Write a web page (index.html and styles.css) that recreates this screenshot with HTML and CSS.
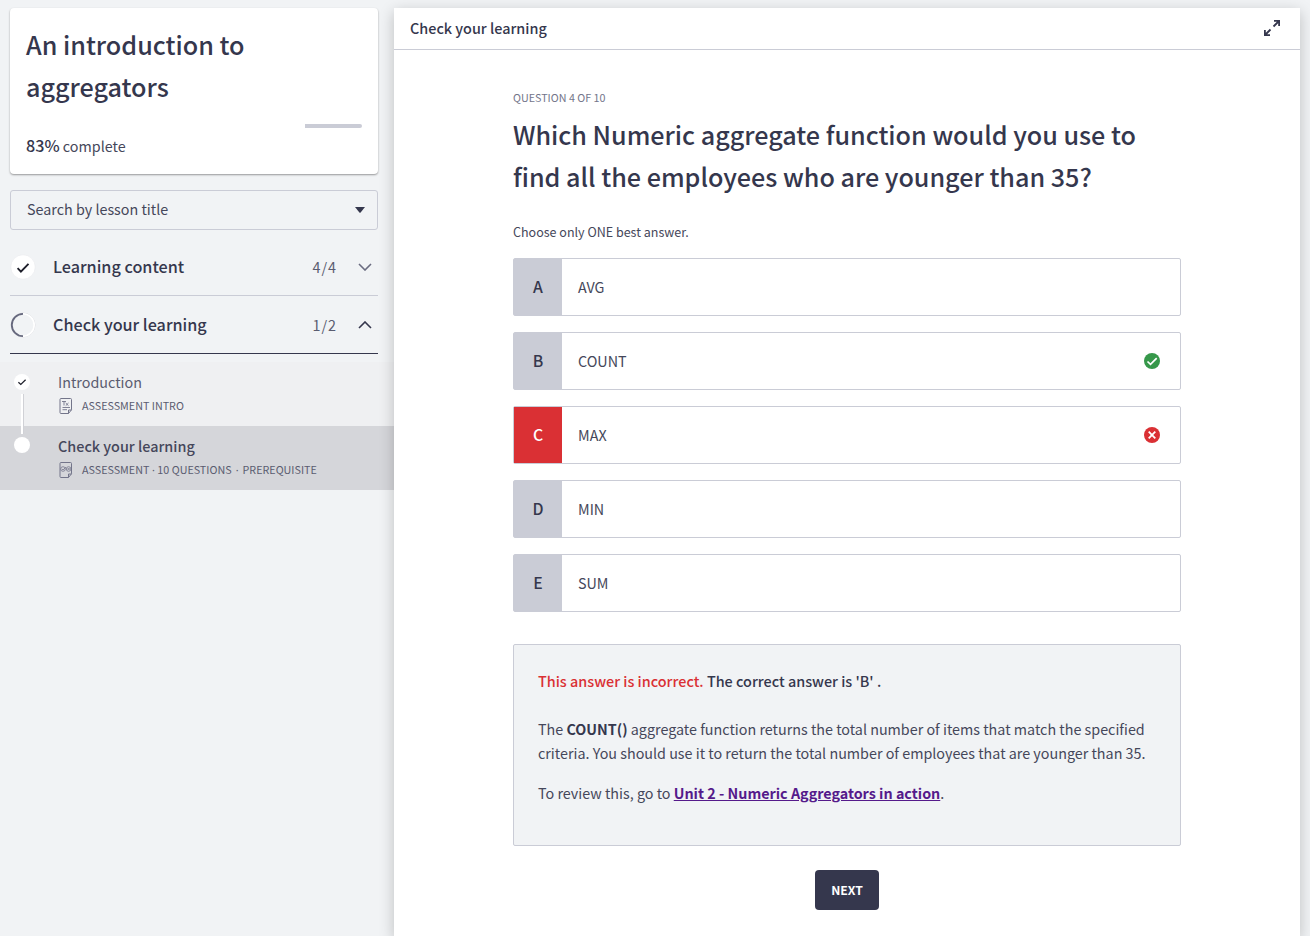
FILE: index.html
```html
<!DOCTYPE html>
<html lang="en">
<head>
<meta charset="utf-8">
<title>An introduction to aggregators</title>
<link rel="stylesheet" href="styles.css">
</head>
<body>
<div class="app">
  <aside class="sidebar">
    <section class="course-card">
      <h1 class="title">An introduction to aggregators</h1>
      <div class="progress"><div class="progress-rest"></div></div>
      <p class="complete"><span class="percent">83%</span> complete</p>
    </section>
    <div class="search">
      <span class="search-text">Search by lesson title</span>
      <svg width="10" height="6" viewBox="0 0 10 6"><path d="M0 0h10L5.6 5.5q-.6.6-1.2 0z" fill="#35374d"/></svg>
    </div>
    <div class="section">
      <svg class="state" width="26" height="26" viewBox="0 0 26 26"><circle cx="13" cy="13" r="12.2" fill="#fff" stroke="#e6e7ea" stroke-width=".5"/><path d="M7.6 14.2l3.3 3.4 7.6-7.8" fill="none" stroke="#1e1f2b" stroke-width="1.9"/></svg>
      <span class="section-name">Learning content</span>
      <span class="count">4/4</span>
      <svg width="14" height="8" viewBox="0 0 14 8"><path d="M1 1l6 6 6-6" fill="none" stroke="#6a6c80" stroke-width="1.6"/></svg>
    </div>
    <div class="section open">
      <svg class="state" width="26" height="26" viewBox="0 0 26 26"><circle cx="13" cy="13" r="12" fill="none" stroke="#dedfe3" stroke-width="1"/><path d="M13 1.8a11.2 11.2 0 0 1 0 22.4" fill="none" stroke="#fff" stroke-width="1.6"/><path d="M13 1.8a11.2 11.2 0 0 0 0 22.4" fill="none" stroke="#66687d" stroke-width="1.8"/></svg>
      <span class="section-name">Check your learning</span>
      <span class="count">1/2</span>
      <svg width="14" height="8" viewBox="0 0 14 8"><path d="M1 7l6-6 6 6" fill="none" stroke="#35374d" stroke-width="1.6"/></svg>
    </div>
    <div class="lessons">
      <div class="lesson">
        <svg class="dot" width="16" height="16" viewBox="0 0 16 16"><circle cx="8" cy="8" r="8" fill="#fff"/><path d="M4.4 8.2l2.4 2.3 4.8-4.7" fill="none" stroke="#1e1f2b" stroke-width="1.2"/></svg>
        <div class="lesson-name">Introduction</div>
        <div class="lesson-meta">
          <svg width="14" height="16" viewBox="0 0 14 16" fill="none" stroke="#73758a" stroke-width="1"><path d="M2 .5h9.500q1 0 1 1v10.300l-3 3.700h-7.500q-1 0-1-1v-13q0-1 1-1zM9.500 15.500v-3.500h3"/><path d="M3 3.500h4M5 3.500v4M6.700 5l2.800 2.700M9.500 5l-2.800 2.700M3.500 9.500h7.500M3.500 11.700h4.500" stroke-width=".9"/></svg>
          <span>ASSESSMENT INTRO</span>
        </div>
      </div>
      <div class="lesson current">
        <svg class="dot" width="16" height="16" viewBox="0 0 16 16"><circle cx="8" cy="8" r="8" fill="#fff"/></svg>
        <div class="lesson-name">Check your learning</div>
        <div class="lesson-meta">
          <svg width="14" height="16" viewBox="0 0 14 16" fill="none" stroke="#73758a" stroke-width="1"><path d="M2 .5h9.500q1 0 1 1v10.300l-3 3.700h-7.500q-1 0-1-1v-13q0-1 1-1zM9.500 15.500v-3.500h3"/><g stroke-width=".8"><circle cx="4" cy="7" r="2.300"/><circle cx="9.600" cy="7" r="2.300"/><path d="M3 7l1 1 3-3M8.600 6l2 2M10.600 6l-2 2"/></g></svg>
          <span>ASSESSMENT<i class="sep">·</i>10 QUESTIONS<i class="sep wide">·</i>PREREQUISITE</span>
        </div>
      </div>
      <div class="connector"></div>
    </div>
  </aside>
  <main class="panel">
    <header class="panel-head">
      <span class="panel-name">Check your learning</span>
      <svg width="16" height="16" viewBox="0 0 16 16" fill="none" stroke="#35374d" stroke-width="1.800"><path d="M10 .9h5.100v5.100M15 1L9.500 6.500M6 15.100H.9v-5.100M1 15l5.500-5.500"/></svg>
    </header>
    <div class="question">
      <div class="number">QUESTION 4 OF 10</div>
      <h2 class="title">Which Numeric aggregate function would you use to find all the employees who are younger than 35?</h2>
      <p class="hint">Choose only ONE best answer.</p>
      <div class="answers">
        <div class="answer"><b class="letter">A</b><span>AVG</span></div>
        <div class="answer"><b class="letter">B</b><span>COUNT</span>
          <svg width="16" height="16" viewBox="0 0 16 16"><circle cx="8" cy="8" r="8" fill="#36984a"/><path d="M3.500 8.500l3 2.900 6.200-6.200" fill="none" stroke="#fff" stroke-width="1.700"/></svg></div>
        <div class="answer wrong"><b class="letter">C</b><span>MAX</span>
          <svg width="16" height="16" viewBox="0 0 16 16"><circle cx="8" cy="8" r="8" fill="#da3034"/><path d="M4.700 4.700l6.600 6.600M11.300 4.700l-6.600 6.600" fill="none" stroke="#fff" stroke-width="1.800"/></svg></div>
        <div class="answer"><b class="letter">D</b><span>MIN</span></div>
        <div class="answer"><b class="letter">E</b><span>SUM</span></div>
      </div>
      <div class="feedback">
        <p class="verdict"><span class="bad">This answer is incorrect.</span> The correct answer is 'B' .</p>
        <p>The <b>COUNT()</b> aggregate function returns the total number of items that match the specified<br>criteria. You should use it to return the total number of employees that are younger than 35.</p>
        <p>To review this, go to <a class="link" href="#">Unit 2 - Numeric Aggregators in action</a>.</p>
      </div>
      <button class="next">NEXT</button>
    </div>
  </main>
</div>
</body>
</html>
```
FILE: styles.css
```css
* { box-sizing: border-box; }

body {
  margin: 0;
  height: 936px;
  overflow: hidden;
  background: #f1f3f5;
  color: #35374d;
  font-family: "Noto Sans CJK SC", "Noto Sans", sans-serif;
  font-size: 14.33px;
  line-height: 24px;
}

h1, h2, p { margin: 0; }
svg { display: block; flex: none; }

.app { display: flex; height: 936px; padding-top: 8px; }

.sidebar { width: 394px; flex: none; }

.title { font-size: 25.15px; font-weight: 500; line-height: 42px; }

.course-card {
  width: 368px;
  height: 166px;
  margin-left: 10px;
  padding: 15px 16px;
  background: #fff;
  border-radius: 4px;
  box-shadow: 0 1px 2px rgba(0, 0, 0, .38);
}
.progress { display: flex; justify-content: flex-end; height: 4px; margin-top: 17px; }
.progress-rest { width: 57px; background: #caccd6; border-radius: 0 2px 2px 0; }
.complete { margin-top: 6px; color: #45475a; }
.percent { color: #35374d; font-size: 16.2px; font-weight: 500; line-height: 20px; }

.search {
  display: flex;
  align-items: center;
  justify-content: space-between;
  width: 368px;
  height: 40px;
  margin: 16px 0 8px 10px;
  padding: 0 12px 0 16px;
  border: 1px solid #caccd6;
  border-radius: 3px;
  color: #45475a;
}
.search-text { padding-bottom: 2px; }

.section {
  display: flex;
  align-items: center;
  width: 368px;
  height: 58px;
  margin-left: 10px;
  padding-right: 6px;
  border-bottom: 1px solid #caccd6;
}
.section.open { border-bottom-color: #35374d; }
.section-name { flex: 1; margin-left: 17px; padding-bottom: 2px; font-size: 16.18px; font-weight: 500; }
.count { margin-right: 21px; color: #5a5c70; letter-spacing: 1px; }

.lessons { position: relative; margin-top: 8px; }
.lesson { position: relative; height: 64px; padding: 8px 0 0 58px; background: #eff0f2; color: #5a5c70; }
.dot { position: absolute; left: 14px; top: 12px; }
.current .dot { top: 11px; }
.current { background: #d5d6da; }
.current .lesson-name { color: #45475b; font-size: 14.4px; font-weight: 500; }
.lesson-meta {
  display: flex;
  align-items: center;
  height: 22px;
  gap: 9px;
  margin: 1px 0 0 1px;
  font-size: 10.74px;
  white-space: nowrap;
}
.sep { display: inline-block; width: 8px; font-family: "Noto Sans", sans-serif; font-style: normal; text-align: center; }
.sep.wide { width: 11px; }
.connector {
  position: absolute;
  left: 21px;
  top: 32px;
  width: 3px;
  height: 40px;
  background: #fff;
  border: solid #d0d1d6;
  border-width: 0 1px 0 0;
}

.panel { position: relative; width: 906px; background: #fff; box-shadow: 0 4px 14px rgba(0, 0, 0, .22); }
.panel-head {
  display: flex;
  align-items: center;
  justify-content: space-between;
  height: 42px;
  padding: 0 20px 1px 16px;
  border-bottom: 1px solid #caccd6;
  font-size: 14.4px;
  font-weight: 500;
}
.panel-name { padding-bottom: 1px; }

.question { display: flex; flex-direction: column; width: 668px; margin: 36px 0 0 119px; }
.number { color: #73758a; font-size: 10.74px; }
.question .title { margin-top: 3px; }
.hint { margin-top: 23px; font-size: 12.53px; color: #45475a; }

.answers { display: flex; flex-direction: column; gap: 16px; margin-top: 14px; }
.answer {
  display: flex;
  align-items: center;
  height: 58px;
  padding-right: 20px;
  border: 1px solid #caccd6;
  border-radius: 2px;
  color: #45475a;
}
.answer span { flex: 1; margin-left: 16px; }
.letter {
  display: flex;
  align-items: center;
  justify-content: center;
  align-self: stretch;
  width: 48px;
  background: #caccd6;
  color: #35374d;
  font-size: 15.8px;
  font-weight: 500;
}
.wrong .letter { background: #da3034; color: #fff; }

.feedback {
  height: 202px;
  margin-top: 32px;
  padding: 24px;
  background: #f1f3f5;
  border: 1px solid #caccd6;
  border-radius: 2px;
  color: #45475a;
  white-space: nowrap;
}
.feedback p { margin-bottom: 16px; }
.feedback .verdict { margin-bottom: 24px; color: #35374d; font-size: 14.4px; font-weight: 500; }
.feedback .bad { color: #da3034; }
.feedback b { color: #35374d; font-weight: 700; }
.link { color: #551a8b; font-weight: 700; }

.next {
  align-self: center;
  width: 64px;
  height: 40px;
  margin-top: 24px;
  padding: 0;
  border: 0;
  border-radius: 4px;
  background: #35374d;
  color: #fff;
  font-family: inherit;
  font-size: 12.2px;
  font-weight: 700;
}
```
